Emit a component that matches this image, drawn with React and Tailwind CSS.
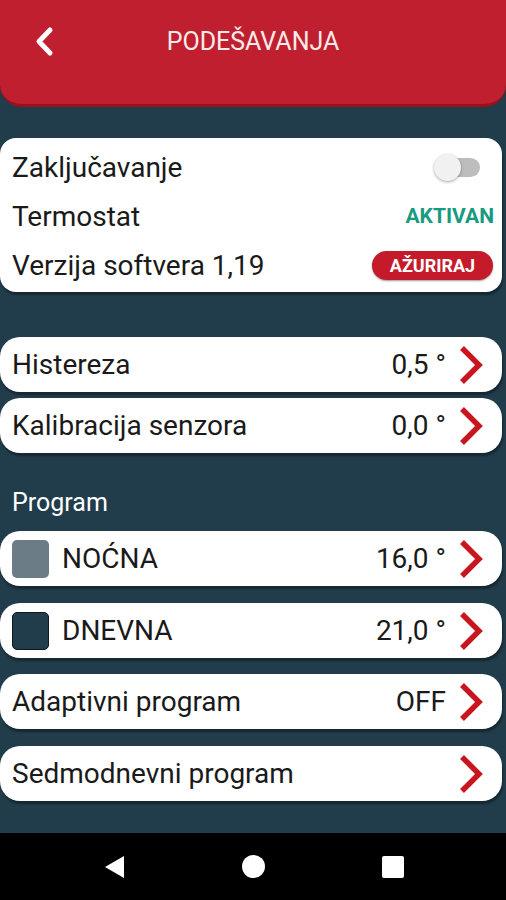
import React from 'react';

const Chevron = () => (
  <svg width="26" height="40" viewBox="0 0 26 40" className="shrink-0">
    <path d="M4 3 L21 20 L4 37" fill="none" stroke="#c8161e" strokeWidth="5.5" strokeLinejoin="miter" />
  </svg>
);

const RowCard = ({ label, value, swatch, className = '' }) => (
  <div className={`flex h-[55px] w-[502px] shrink-0 items-center rounded-[20px] bg-white pl-3 pr-[18px] shadow-[1px_3px_2px_rgba(0,0,0,0.35)] ${className}`}>
    {swatch && <div className={`mr-[13px] h-[38px] w-[37px] shrink-0 rounded-[5px] ${swatch}`} />}
    <span className="flex-1 text-[28px] leading-none text-[#1a1a1a]">{label}</span>
    {value && <span className="mr-[12px] text-[28px] leading-none text-[#1a1a1a]">{value}</span>}
    <Chevron />
  </div>
);

export default function App() {
  return (
    <div className="flex h-[900px] w-[506px] flex-col bg-[#213c4b]" style={{ fontFamily: 'Roboto, "Noto Sans", sans-serif' }}>
      {/* Header */}
      <div className="relative flex h-[107px] shrink-0 items-start rounded-b-[22px] border-b-[3px] border-[#9c0f1c] bg-[#c01f2f]">
        <svg width="30" height="36" viewBox="0 0 30 36" className="absolute left-[31px] top-[24px]">
          <path d="M19 6 L8 17.5 L19 29" fill="none" stroke="white" strokeWidth="5" strokeLinecap="round" strokeLinejoin="round" />
        </svg>
        <div className="mt-[27px] w-full text-center text-[25px] leading-[30px] text-[#fbeaea]">PODEŠAVANJA</div>
      </div>

      {/* Info card */}
      <div className="mt-[31px] flex w-[502px] shrink-0 flex-col rounded-[16px] bg-white px-3 pt-[5px] pb-[2px] shadow-[1px_3px_2px_rgba(0,0,0,0.35)]">
        <div className="flex h-[49px] items-center justify-between">
          <span className="text-[28px] leading-none text-[#1a1a1a]">Zaključavanje</span>
          <div className="relative mr-[10px] h-[27px] w-[46px]">
            <div className="absolute left-[10px] top-[4px] h-[19px] w-[36px] rounded-full bg-[#bdbdbd]" />
            <div className="absolute left-0 top-0 h-[27px] w-[27px] rounded-full bg-[#f1f1f1] shadow-[0_1px_3px_rgba(0,0,0,0.35)]" />
          </div>
        </div>
        <div className="flex h-[49px] items-center justify-between">
          <span className="text-[28px] leading-none text-[#1a1a1a]">Termostat</span>
          <span className="mr-[-4px] text-[21px] font-bold leading-none text-[#179a82]">AKTIVAN</span>
        </div>
        <div className="flex h-[49px] items-center justify-between">
          <span className="text-[28px] leading-none text-[#1a1a1a]">Verzija softvera 1,19</span>
          <span className="mr-[-3px] flex h-[29px] w-[121px] items-center justify-center rounded-full bg-[#c41a2a] text-[18px] font-bold leading-none text-white shadow-[0_1px_2px_rgba(0,0,0,0.4)]">AŽURIRAJ</span>
        </div>
      </div>

      <RowCard className="mt-[45px]" label="Histereza" value="0,5 °" />
      <RowCard className="mt-[6px]" label="Kalibracija senzora" value="0,0 °" />

      <div className="mt-[35px] pl-3 text-[25px] leading-[30px] text-white">Program</div>

      <RowCard className="mt-[13px]" label="NOĆNA" value="16,0 °" swatch="bg-[#6c7c86]" />
      <RowCard className="mt-[17px]" label="DNEVNA" value="21,0 °" swatch="bg-[#213c4b] border border-[#0d1a22]" />
      <RowCard className="mt-[16px]" label="Adaptivni program" value="OFF" />
      <RowCard className="mt-[17px]" label="Sedmodnevni program" />

      {/* Nav bar */}
      <div className="mt-auto flex h-[67px] shrink-0 items-center justify-center gap-[117px] bg-black">
        <svg width="22" height="24" viewBox="0 0 22 24">
          <path d="M21 1 L21 23 L2 12 Z" fill="white" />
        </svg>
        <div className="h-[23px] w-[23px] rounded-full bg-white" />
        <div className="h-[22px] w-[22px] rounded-[2px] bg-white" />
      </div>
    </div>
  );
}
